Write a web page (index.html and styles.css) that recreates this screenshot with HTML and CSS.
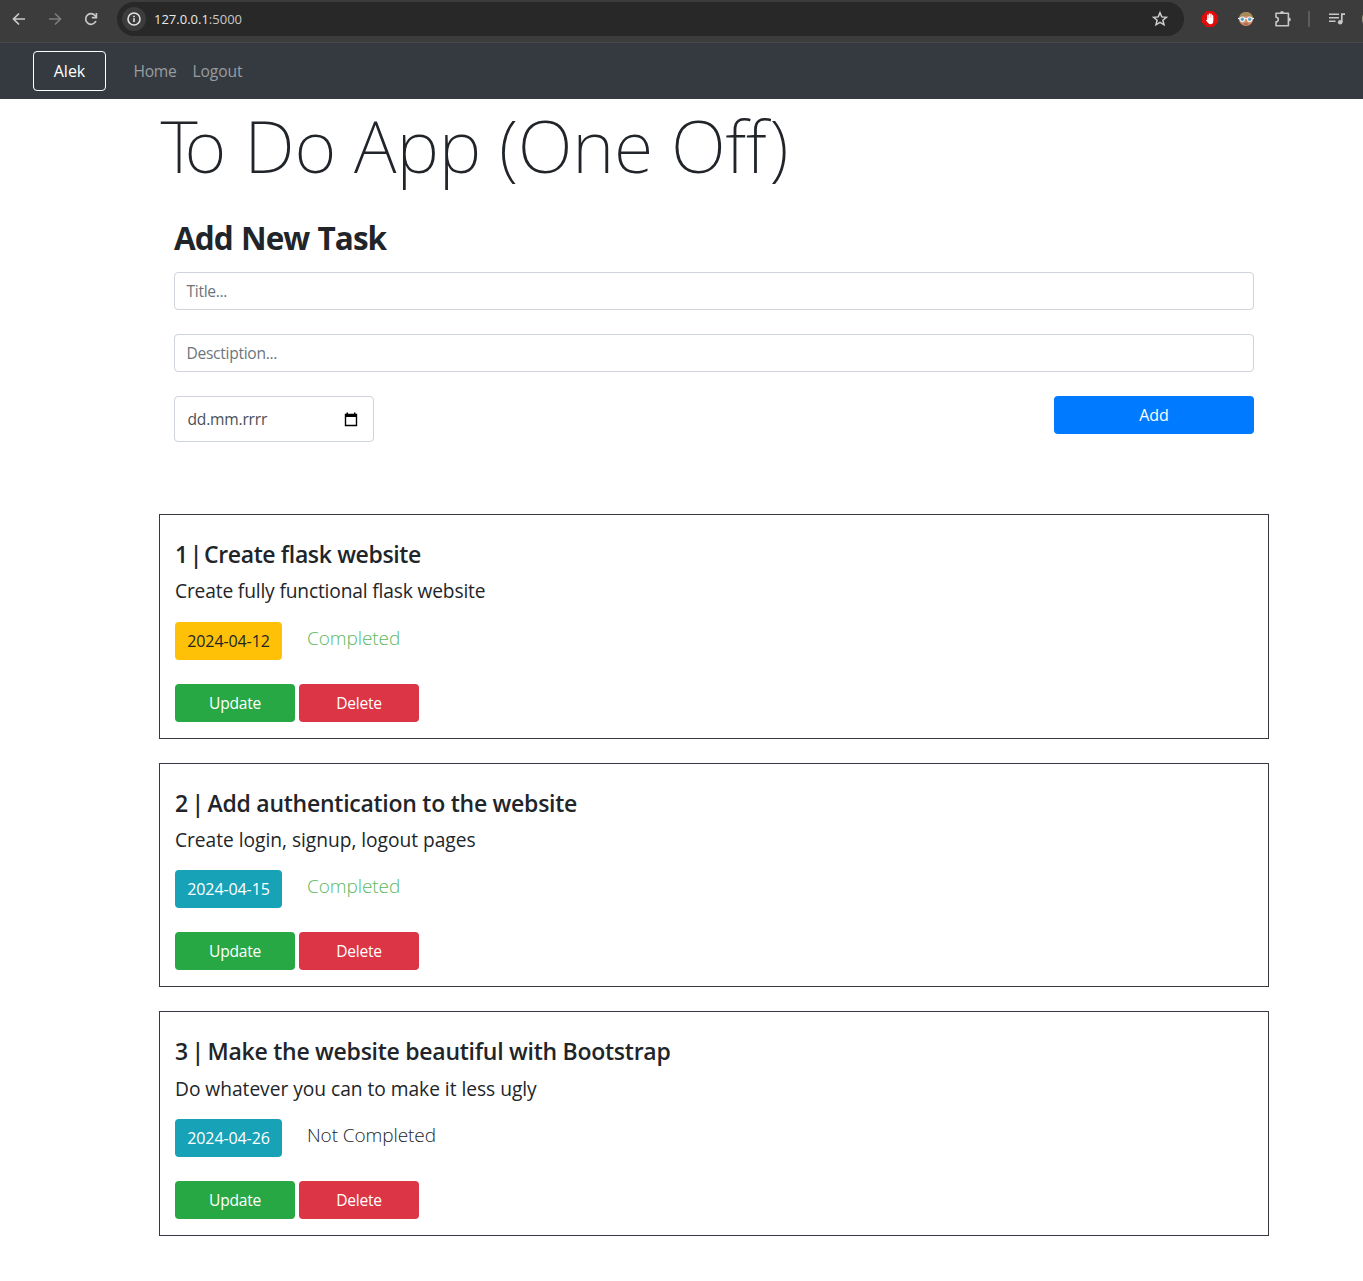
FILE: index.html
```html
<!DOCTYPE html>
<html lang="en">
<head>
<meta charset="utf-8">
<title>To Do App</title>
<link rel="stylesheet" href="styles.css">
</head>
<body>
<div class="browser">
  <svg class="icon back" width="16" height="16" viewBox="0 0 16 16" fill="none" stroke="#c9c9c9" stroke-width="1.7"><path d="M14 8H3M8 2.5L2.5 8L8 13.5"/></svg>
  <svg class="icon forward" width="16" height="16" viewBox="0 0 16 16" fill="none" stroke="#7c7c7c" stroke-width="1.7"><path d="M2 8h11M8 2.5L13.5 8L8 13.5"/></svg>
  <svg class="icon reload" width="16" height="16" viewBox="0 0 16 16" fill="none" stroke="#c9c9c9" stroke-width="1.7"><path d="M12.9 10A5.3 5.3 0 1 1 12 4.5L13.2 6"/><path d="M13.4 2v4.6H8.8"/></svg>
  <div class="address">
    <span class="info"><svg width="16" height="16" viewBox="0 0 16 16" fill="none" stroke="#e3e3e3" stroke-width="1.6"><circle cx="8" cy="8" r="6"/><path d="M8 7.2v3.9M8 4.7v1.6"/></svg></span>
    <span class="url">127.0.0.1<span class="port">:5000</span></span>
    <svg class="star" width="18" height="18" viewBox="0 0 18 18" fill="none" stroke="#cfcfcf" stroke-width="1.5"><path d="M9 2.7l1.8 4.2 4.6.4-3.5 3 1.1 4.5L9 12.4l-4 2.4 1.1-4.5-3.5-3 4.6-.4z"/></svg>
  </div>
  <svg class="icon blocker" width="16" height="16" viewBox="0 0 16 16"><path fill="#e00b0b" d="M4.7 0h6.600L16 4.700v6.600L11.300 16H4.700L0 11.300V4.700z"/><path d="M5.900 8V4.200M7.500 8V2.900M9.100 8V3.300M10.600 8V4.700" stroke="#fff" stroke-width="1.400" stroke-linecap="round"/><path fill="#fff" d="M5.200 7h6.100v3q0 3.300-3 3.300Q6.600 13.300 4 9.200q.6-.9 1.300 0z"/></svg>
  <svg class="icon avatar" width="16" height="16" viewBox="0 0 16 16"><circle cx="8" cy="8" r="7" fill="#cf8a68"/><path fill="#a68a55" d="M1 7Q2 1 8 1t7 6Q11 4 8 5 5 4 1 7"/><path d="M0 7.500h16" stroke="#eee" stroke-width="1.300"/><circle cx="4.300" cy="8.300" r="2.300" fill="#5ba6c4" stroke="#eee" stroke-width="1.200"/><circle cx="11.700" cy="8.300" r="2.300" fill="#5ba6c4" stroke="#eee" stroke-width="1.200"/><path d="M6 13h4" stroke="#99543c"/></svg>
  <svg class="icon puzzle" width="18" height="18" viewBox="0 0 18 18"><path fill="none" stroke="#c7c7c7" stroke-width="1.600" stroke-linejoin="round" d="M2 3.300h12.400v12.400H2v-3.800q2.300 0 2.300-2.300T2 7.300z"/><path fill="#c7c7c7" d="M6 3a2 2 0 0 1 4 0zM14.800 7.500a2 2 0 0 1 0 4z"/></svg>
  <span class="divider"></span>
  <svg class="icon media" width="16" height="14" viewBox="0 0 16 14"><path d="M0 2.200h10M0 5.700h10M0 9.200h6.500" stroke="#c7c7c7" stroke-width="1.600"/><path d="M12.800 10V2.200H16" stroke="#c7c7c7" stroke-width="1.700" fill="none"/><circle cx="11.200" cy="10.200" r="2.300" fill="#c7c7c7"/></svg>
  <span class="profile"></span>
</div>
<nav class="navbar">
  <a class="brand">Alek</a>
  <a class="link home">Home</a>
  <a class="link logout">Logout</a>
</nav>
<main class="container">
  <h1 class="title"><span class="kern">T</span>o Do App (One Off)</h1>
  <form class="form">
    <h2 class="form-title">Add New Task</h2>
    <div class="field">Title...</div>
    <div class="field">Desctiption...</div>
    <div class="form-row">
      <div class="date"><span>dd.mm.rrrr</span><svg width="14" height="15" viewBox="0 0 14 15"><path d="M1.500 2.500h11v11h-11z" fill="none" stroke="#000" stroke-width="1.400"/><path d="M1 2h12v3H1zM2.500.5H4V3H2.500zM10 .5h1.500V3H10z"/></svg></div>
      <div class="btn primary">Add</div>
    </div>
  </form>
  <section class="card">
    <h3 class="task first"><span class="number narrow">1 | </span>Create flask website</h3>
    <p class="desc tight">Create fully functional flask website</p>
    <div class="meta"><span class="btn badge warning">2024-04-12</span><span class="status done">Completed</span></div>
    <div class="actions"><a class="btn success">Update</a><a class="btn danger">Delete</a></div>
  </section>
  <section class="card">
    <h3 class="task"><span class="number">2 | </span>Add authentication to the website</h3>
    <p class="desc">Create login, signup, logout pages</p>
    <div class="meta"><span class="btn badge teal">2024-04-15</span><span class="status done">Completed</span></div>
    <div class="actions"><a class="btn success">Update</a><a class="btn danger">Delete</a></div>
  </section>
  <section class="card">
    <h3 class="task"><span class="number">3 | </span>Make the website beautiful with Bootstrap</h3>
    <p class="desc">Do whatever you can to make it less ugly</p>
    <div class="meta"><span class="btn badge teal">2024-04-26</span><span class="status">Not Completed</span></div>
    <div class="actions"><a class="btn success">Update</a><a class="btn danger">Delete</a></div>
  </section>
</main>
</body>
</html>
```

FILE: styles.css
```css
* { box-sizing: border-box; }
body {
  margin: 0;
  font: 400 16px/24px "Open Sans", "Noto Sans", sans-serif;
  color: #212529;
  background: #fff;
  overflow: hidden;
}
h1, h2, h3, p { margin: 0; white-space: nowrap; }
svg { display: block; flex: none; }

.browser {
  display: flex;
  align-items: center;
  height: 43px;
  padding: 0 0 5px 11px;
  background: #3c3c3c;
  border-bottom: 1px solid #474747;
  overflow: hidden;
}
.forward { margin-left: 20px; }
.reload { margin-left: 20px; }
.address {
  flex: none;
  display: flex;
  align-items: center;
  width: 1067px;
  height: 34px;
  margin: 1px 0 0 18px;
  padding: 0 15px 0 5px;
  border-radius: 17px;
  background: #282828;
}
.info {
  display: grid;
  place-items: center;
  width: 24px;
  height: 24px;
  border-radius: 50%;
  background: #3c3c3c;
}
.url { margin-left: 8px; font-size: 13px; color: #e8e8e8; }
.port { color: #c7c7c7; }
.star { margin-left: auto; }
.blocker { margin-left: 18px; }
.avatar { margin-left: 20px; }
.puzzle { margin-left: 20px; }
.divider { flex: none; width: 2px; height: 16px; margin-left: 16px; background: #5c5c5c; }
.media { margin-left: 19px; }
.profile { flex: none; width: 20px; height: 20px; margin-left: 17px; border-radius: 50%; background: #9b9b83; }

.navbar { display: flex; align-items: center; height: 56px; padding-left: 33px; background: #343a40; }
.brand {
  width: 73px;
  height: 40px;
  border: 1px solid #fff;
  border-radius: 4px;
  line-height: 39px;
  text-align: center;
  color: #fff;
}
.link { font-size: 15.6px; color: #9a9da0; }
.home { margin-left: 27.5px; width: 59px; letter-spacing: -0.3px; }
.logout { letter-spacing: -0.1px; }

.container { width: 1110px; margin-left: 159px; }
.title {
  height: 103px;
  padding: 3px 0 0 1.5px;
  font: 200 72px/86px "Noto Sans", "Open Sans", sans-serif;
  letter-spacing: -0.2px;
  word-spacing: -0.5px;
}
.kern { letter-spacing: -13px; }
.form { height: 312px; padding: 16px 15px 0; }
.form-title { height: 54px; font-size: 31.5px; line-height: 40px; font-weight: 700; letter-spacing: -0.95px; word-spacing: 1px; }
.field {
  height: 38px;
  margin-bottom: 24px;
  padding: 6px 11.5px;
  border: 1px solid #ced4da;
  border-radius: 4px;
  font-size: 15.6px;
  color: #6c757d;
  letter-spacing: -0.3px;
}
.form-row { display: flex; justify-content: space-between; align-items: flex-start; }
.date {
  display: flex;
  align-items: center;
  justify-content: space-between;
  width: 200px;
  height: 46px;
  padding: 0 15px 0 12.5px;
  border: 1px solid #ced4da;
  border-radius: 4px;
  font-size: 15.6px;
  color: #495057;
  letter-spacing: -0.2px;
}
.btn { display: block; height: 38px; border-radius: 4px; line-height: 38px; text-align: center; color: #fff; }
.primary { width: 200px; background: #007bff; }

.card { height: 224.6px; margin-bottom: 24px; padding: 24px 15px 0; border: 1px solid #343a40; }
.task { height: 37.4px; font-size: 23px; line-height: 31px; font-weight: 600; letter-spacing: -0.26px; }
.first { letter-spacing: -0.36px; }
.number { letter-spacing: -1.3px; }
.narrow { letter-spacing: -2.2px; }
.desc { height: 45.2px; font-size: 19.2px; line-height: 30.2px; font-weight: 400; letter-spacing: -0.03px; }
.tight { letter-spacing: -0.16px; }
.meta { display: flex; height: 62px; }
.badge { width: 107px; letter-spacing: -0.1px; }
.warning { background: #ffc107; color: #212529; }
.teal { background: #17a2b8; }
.status { margin-left: 25px; font-size: 19px; line-height: 32px; font-weight: 300; letter-spacing: -0.08px; }
.done { color: #5cb85c; }
.actions { display: flex; gap: 4px; }
.actions .btn { width: 120px; font-size: 15.6px; letter-spacing: -0.25px; }
.success { background: #28a745; }
.danger { background: #dc3545; }
```
